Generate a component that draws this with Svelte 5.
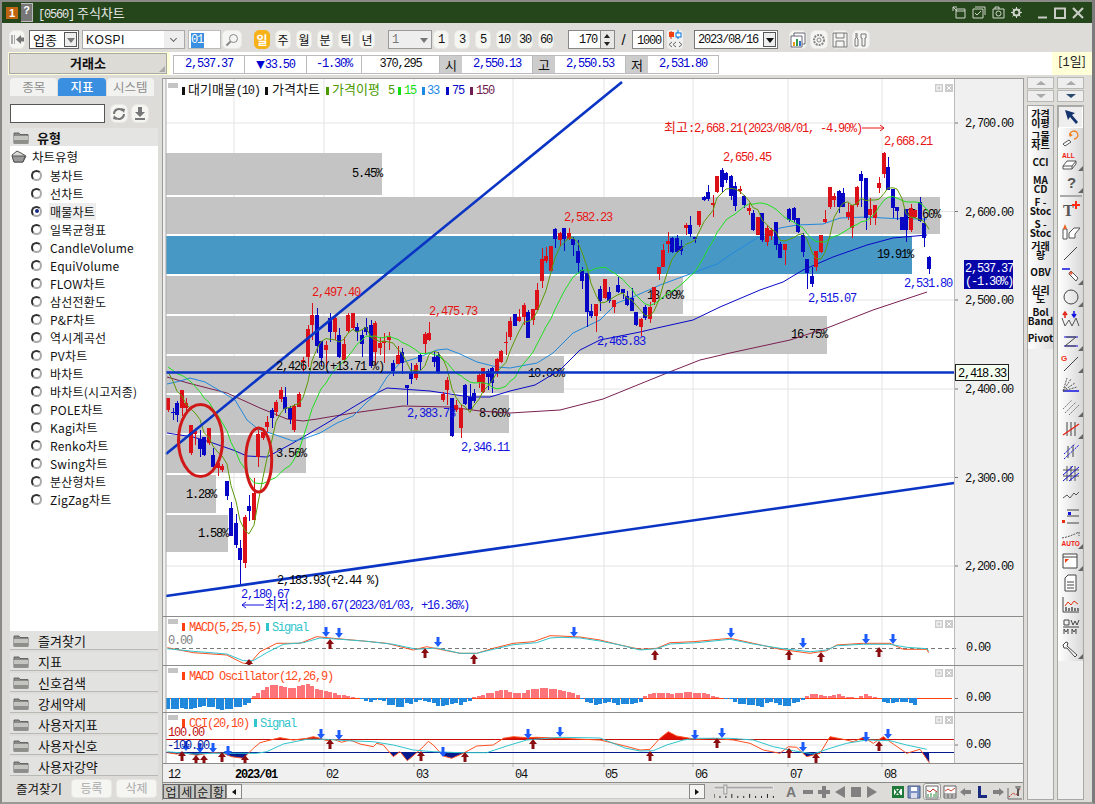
<script>
	const cx = (i) => Math.round(168.3 + 4.5 * i);

	// candles in screen px: [0 red / 1 blue, body top, body bottom, high, low]
	const candles = [
		[0,398,410,398,412],[1,412,413,408,420],[1,403,415,401,422],[0,390,408,390,416],[0,403,408,398,412],
		[0,425,453,425,455],[0,431,434,428,445],[1,439,449,430,457],[1,437,455,437,456],[0,428,443,428,445],
		[1,455,467,448,469],[0,463,468,460,476],[0,466,470,464,472],[1,481,496,481,500],[1,508,536,502,536],
		[1,523,545,514,548],[1,548,560,540,585],[0,517,563,515,568],[1,506,511,495,521],[0,493,520,478,520],
		[0,434,457,430,467],[0,432,438,428,440],[0,422,427,416,432],[1,410,418,408,428],[0,402,412,400,416],
		[0,390,399,387,402],[1,397,409,387,413],[1,408,419,406,424],[0,406,430,404,432],[0,394,407,392,406],
		[0,360,362,357,373],[0,329,357,325,367],[0,315,325,303,340],[1,315,346,308,353],[1,341,358,341,365],
		[0,345,350,341,367],[1,318,332,313,342],[0,318,332,316,340],[1,335,357,328,358],[0,344,360,337,363],
		[0,315,331,313,333],[0,313,328,313,330],[1,327,332,323,341],[1,335,344,330,357],[1,327,332,318,335],
		[1,325,366,320,368],[0,323,352,321,365],[0,343,348,337,355],[0,341,343,333,363],[0,337,340,332,350],
		[1,363,371,360,376],[0,355,364,346,364],[1,352,363,348,374],[1,385,388,385,405],[1,373,379,363,384],
		[0,365,378,363,380],[1,355,362,353,370],[0,334,344,332,353],[0,333,340,322,341],[1,357,362,352,367],
		[1,355,372,352,374],[0,394,400,392,402],[0,380,390,377,405],[1,398,436,398,437],[0,405,410,400,412],
		[0,408,428,405,438],[1,385,404,384,405],[1,397,409,384,409],[1,393,401,389,403],[0,375,382,373,388],
		[0,368,392,368,393],[1,371,377,369,390],[1,368,383,367,393],[0,359,372,358,377],[0,351,362,350,363],
		[0,342,343,332,355],[0,321,337,317,340],[1,314,326,314,326],[0,317,321,309,322],[0,305,317,303,325],
		[1,312,338,310,338],[0,309,320,309,325],[0,290,310,283,310],[0,259,281,248,288],[0,256,261,247,263],
		[0,246,271,246,272],[1,229,239,228,248],[0,233,240,232,246],[1,228,239,228,251],[0,233,239,228,240],
		[1,239,245,237,256],[1,251,263,240,273],[1,270,281,267,289],[1,273,312,273,327],[1,311,316,304,318],
		[0,304,316,304,332],[1,289,301,286,311],[0,279,298,279,299],[1,292,301,287,303],[0,300,307,300,313],
		[1,285,292,277,293],[1,289,293,289,299],[1,296,305,291,306],[1,298,311,288,311],[1,312,325,312,326],
		[0,319,327,318,336],[1,307,318,305,320],[0,307,319,302,323],[0,287,302,287,305],[0,267,274,267,280],
		[0,250,267,244,267],[0,241,244,232,253],[1,238,252,237,253],[1,238,252,235,253],[1,246,251,240,255],
		[0,225,228,223,235],[1,225,234,216,237],[1,237,239,237,243],[0,211,225,211,227],[1,197,200,196,201],
		[1,192,199,185,201],[0,203,205,195,217],[0,176,192,176,193],[1,170,187,168,192],[1,173,180,172,183],
		[1,176,196,175,200],[1,186,206,182,211],[0,189,191,186,194],[1,196,205,195,208],[0,208,211,203,215],
		[1,213,230,210,231],[0,217,235,217,235],[1,213,240,213,242],[0,228,242,225,246],[0,230,236,228,240],
		[1,222,245,222,250],[1,244,258,242,258],[0,244,250,244,265],[1,209,220,208,222],[1,208,220,207,223],
		[1,218,232,218,233],[1,235,252,233,257],[1,259,273,259,289],[1,276,284,267,287],[0,251,267,251,271],
		[0,235,252,235,253],[0,219,222,210,223],[0,187,207,187,209],[0,196,200,193,207],[1,191,207,190,213],
		[1,193,207,188,207],[0,212,217,203,220],[0,205,228,205,238],[0,187,205,186,207],[1,174,181,171,207],
		[1,178,218,178,230],[0,209,215,198,225],[0,205,218,205,225],[0,183,188,177,193],[0,153,174,152,178],
		[1,167,190,157,190],[1,189,208,189,218],[1,207,211,207,220],[1,217,230,217,230],[1,209,230,209,242],
		[0,208,230,204,232],[0,210,217,210,218],[1,202,221,197,222],[1,223,238,218,247],[1,257,269,256,274]
	];

	const closes = candles.map((c) => (c[0] ? c[2] : c[1]));
	const padded = [...Array(14).fill(365), ...closes];
	function sma(n) {
		return closes
			.map((_, i) => {
				let s = 0;
				for (let k = 0; k < n; k++) s += padded[i + 14 - k];
				return `${cx(i)},${(s / n).toFixed(1)}`;
			})
			.join(' ');
	}
	const ma5 = sma(5);
	const ma15 = sma(15);
	const ma33 = '167,384 180,381 190,378 205,382 222,392 235,400 247,420 258,429 270,433 293,441 303,439 320,433 337,423 353,416 367,402 377,393 387,377 400,363 417,358 437,350 447,349 460,354 477,362 497,367 510,368 537,363 553,353 573,333 600,320 617,303 633,297 660,285 690,274 717,264 733,253 757,238 780,228 797,225 823,224 840,218 867,217 883,218 907,219 927,219';
	const ma75 = '167,433 193,437 210,442 233,450 247,456 267,457 293,443 327,423 360,403 377,393 387,388 430,391 470,397 490,397 510,391 535,385 560,370 580,350 600,340 640,332 657,328 693,320 720,307 760,290 783,282 803,270 833,257 867,245 893,238 927,235';
	const ma150 = '167,377 188,383 227,393 260,408 287,419 303,421 317,419 353,413 403,406 450,407 480,411 510,413 560,410 603,399 667,373 700,360 730,353 790,340 827,328 873,310 927,292';

	// volume-at-price bars
	const bars = [
		[153, 195, 382], [197, 234, 940], [236, 274, 912], [276, 314, 683], [316, 354, 827],
		[356, 393, 564], [395, 433, 509], [435, 473, 306], [475, 513, 216], [515, 552, 228]
	];
	const pctLabels = [
		[352,177,'5.45%'],[904,218,'20.60%'],[877,258,'19.91%'],[647,299,'13.09%'],[791,338,'16.75%'],
		[528,377,'10.00%'],[479,417,'8.60%'],[276,457,'3.56%'],[186,498,'1.28%'],[198,537,'1.58%']
	];
	const redLabels = [[884,145,'2,668.21'],[723,161,'2,650.45'],[564,221,'2,582.23'],[312,296,'2,497.40'],[429,315,'2,475.73']];
	const blueLabels = [[808,302,'2,515.07'],[904,287,'2,531.80'],[597,345,'2,465.83'],[407,417,'2,383.73'],[461,451,'2,346.11'],[241,598,'2,180.67']];
	const gridX = [234, 324, 414, 513, 604, 693, 788, 882];
	const levels = [[123,'2,700.00'],[211.5,'2,600.00'],[300,'2,500.00'],[389,'2,400.00'],[477.5,'2,300.00'],[566,'2,200.00']];

	const pts = (ox, list) => list.map(([x, y]) => `${(ox + x / 3).toFixed(1)},${(610 + y / 3).toFixed(1)}`).join(' ');

	const macd = pts(160, [[22,113],[100,128],[200,135],[250,160],[270,160],[300,125],[350,100],[420,100],[470,80],[520,85],[600,92],[680,100],[760,120],[800,110],[900,130],[950,130],[1000,115],[1060,100],[1120,95],[1170,77],[1200,78]])
		+ ' 580,637 600,640 620,645 ' + pts(640, [[0,118],[50,115],[90,98],[160,95],[270,85],[340,100],[420,118],[510,130],[560,122],[590,105],[670,100],[750,100],[790,118],[860,118],[866,128]]);
	const signal = pts(160, [[22,116],[100,124],[200,132],[250,152],[280,152],[320,128],[370,103],[430,98],[480,84],[540,88],[620,94],[700,103],[770,118],[830,114],[900,130],[950,130],[1000,118],[1060,104],[1130,98],[1170,84],[1200,82]])
		+ ' 580,638 600,641 620,645 ' + pts(640, [[0,120],[50,116],[90,102],[170,98],[270,88],[340,102],[420,115],[510,125],[560,120],[590,107],[670,103],[750,103],[800,112],[860,116],[866,122]]);

	const cciPts = pts(160, [[22,428],[50,432],[80,430],[110,436],[130,432],[160,428],[190,430],[215,440],[250,445],[280,415],[300,398],[340,388],[360,383],[400,390],[440,385],[460,380],[480,385],[500,392],[520,388],[545,397],[570,390],[600,402],[640,410],[650,400],[670,405],[700,440],[720,425],[742,452],[770,428],[790,410],[805,394],[820,405],[850,438],[875,445],[910,430],[950,408],[1000,405],[1030,385],[1060,380],[1100,383],[1130,382],[1200,385]])
		+ ' 600,740 625,746 ' + pts(640, [[0,420],[30,418],[60,385],[85,365],[110,378],[150,385],[170,388],[220,385],[280,390],[330,400],[370,420],[420,430],[445,410],[470,412],[500,440],[540,430],[570,380],[610,388],[640,395],[670,382],[700,400],[730,380],[750,395],[800,430],[840,418],[868,458]]);
	const cciSig = pts(160, [[22,425],[100,432],[160,430],[230,430],[290,430],[320,425],[370,402],[440,388],[500,388],[560,392],[640,395],[700,405],[760,420],[820,425],[900,428],[980,428],[1040,408],[1100,390],[1200,382]])
		+ ' 600,738 625,748 ' + pts(640, [[0,423],[40,422],[80,405],[130,390],[170,385],[270,385],[340,390],[400,410],[460,422],[520,432],[570,415],[620,400],[680,390],[750,392],[800,405],[860,418]]);
	const cciRed = `168,739 ${cciPts} 929,739`;
	const cciNavy = `168,752 ${cciPts} 929,752`;

	// oscillator heights in 3x px off the zero line
	const oscTop = [
		297,296,297,295,297,297,295,290,289,290,292,298,301,298,297,292,290,285,280,
		258,248,240,232,225,225,228,230,233,233,228,225,222,228,238,240,242,245,250,255,255,258,260,
		264,267,272,275,270,270,272,285,285,290,290,280,282,275,270,272,275,278,288,288,285,282,280,285,275,272,
		262,258,255,250,248,242,240,240,245,248,248,250,240,236,236,235,235,236,238,240,242,245,250,256,
		268,275,280,285,282,278,276,280,284,283,
		283,282,278,275,
		258,252,248,248,250,250,252,248,248,247,246,248,250,250,252,258,262,263,
		267,268,275,282,283,285,285,288,290,280,277,278,285,288,287,280,275,270,
		257,253,253,254,258,258,254,253,258,262,262,263,258,253,258,260,263,
		275,278,278,276,277,277,280,285
	];
	const osc = oscTop.slice(0, 170).map((v, i) => ({ x: cx(i) - 2, y: v < 265 ? 610 + v / 3 : 698.3, h: Math.abs(v - 265) / 3, up: v < 265 }));

	const macdDown = [[326,632],[339,633],[438,642],[574,632],[731,633],[803,643],[866,639],[893,639]];
	const macdUp = [[249,664],[330,644],[425,653],[474,659],[655,655],[789,655],[821,657],[879,652]];
	const cciDown = [[186,746],[200,748],[213,748],[228,751],[321,734],[339,735],[443,752],[528,734],[560,732],[695,735],[722,733],[803,747],[866,737],[888,734]];
	const cciUp = [[182,756],[196,760],[204,760],[222,757],[245,760],[330,744],[421,756],[465,757],[533,744],[650,756],[717,743],[789,753],[816,758],[879,746]];

	const dayBtns = ['주', '월', '분', '틱', '년'];
	const numBtns = ['1', '3', '5', '10', '30', '60'];
	const radios = ['봉차트','선차트','매물차트','일목균형표','CandleVolume','EquiVolume','FLOW차트','삼선전환도','P&F차트','역시계곡선','PV차트','바차트','바차트(시고저종)','POLE차트','Kagi차트','Renko차트','Swing차트','분산형차트','ZigZag차트'];
	const groups = ['즐겨찾기','지표','신호검색','강세약세','사용자지표','사용자신호','사용자강약'];
	const shortcuts = [['가격','이평'],['그물','차트'],['CCI'],['MA','CD'],['F -','Stoc'],['S -','Stoc'],['거래','량'],['OBV'],['심리','도'],['Bol','Band'],['Pivot']];
</script>

{#snippet folder()}
	<svg class="folder" width="16" height="13" viewBox="0 0 16 13">
		<path d="M1 2h5l1 1.5h8v9H1z" fill="#8a8a86" stroke="#666" />
		<path d="M1 5h14v7.500H1z" fill="#c4c4c0" />
		<path d="M1 9h14v3.500H1z" fill="#8e8e8a" />
	</svg>
{/snippet}

{#snippet paneBtns(y)}
	<rect x="935" {y} width="8" height="8" fill="#ccc" /><rect x="937" y={y + 2} width="4" height="4" fill="none" stroke="#fff" />
	<rect x="945" {y} width="8" height="8" fill="#ccc" /><path d="M947 {y + 2}l4 4m0-4l-4 4" stroke="#fff" />
{/snippet}

<div class="win">
	<header class="title">
		<span class="badge one">1</span>
		<span class="badge q">?</span>
		<span class="caption"><span class="m">[0560]</span> 주식차트</span>
		<div class="title-icons">
			<svg width="14" height="13" viewBox="0 0 14 13"><path d="M4 3h9v9H4zM4 5h9M1 5V1h4M1 1l4 4" fill="none" stroke="#cfd4cc" /></svg>
			<svg width="14" height="13" viewBox="0 0 14 13"><path d="M3 1h10v8M1 3h10v9H1zM3 7l2 2 4-4" fill="none" stroke="#cfd4cc" /></svg>
			<svg width="13" height="13" viewBox="0 0 13 13"><path d="M1 3h11v9H1zM3 3V1h4v2" fill="none" stroke="#cfd4cc" /><circle cx="6.500" cy="7.500" r="2.500" fill="none" stroke="#cfd4cc" /></svg>
			<svg width="11" height="11" viewBox="0 0 11 11"><circle cx="5.500" cy="5.500" r="3" fill="none" stroke="#cfd4cc" stroke-width="2" /><path d="M5.500 0v2M5.500 9v2M0 5.500h2M9 5.500h2M1.500 1.500l1.500 1.500M8 8l1.500 1.500M1.500 9.500L3 8M8 3l1.500-1.500" stroke="#cfd4cc" /></svg>
			<svg class="w-min" width="11" height="12" viewBox="0 0 11 12"><path d="M1 10.500h9" stroke="#c8ccc4" stroke-width="2" /></svg>
			<svg width="12" height="12" viewBox="0 0 12 12"><path d="M1 1.500h10v9.500H1z" fill="none" stroke="#c8ccc4" stroke-width="2" /></svg>
			<svg width="12" height="12" viewBox="0 0 12 12"><path d="M1 1l10 10M11 1L1 11" stroke="#c8ccc4" stroke-width="2.200" /></svg>
		</div>
	</header>

	<div class="row1">
		<button class="soft start"><svg width="14" height="11" viewBox="0 0 14 11"><path d="M1 1h2v9H1zM4 1h1v9H4z" fill="#aaa" /><path d="M6 5.500L11 1v2.500h3v4h-3V10z" fill="#777" /></svg></button>
		<div class="combo up"><span class="ko">업종</span><i class="drop boxed"></i></div>
		<div class="combo kospi"><span class="lat">KOSPI</span><i class="chev"></i></div>
		<div class="code"><span class="sel">01</span></div>
		<button class="soft search"><svg width="14" height="14" viewBox="0 0 14 14"><circle cx="8.500" cy="5.500" r="4" fill="none" stroke="#888" /><path d="M5.500 8.500l-4 4" stroke="#888" stroke-width="2" /></svg></button>
		<button class="soft per active">일</button>
		{#each dayBtns as b}<button class="soft per">{b}</button>{/each}
		<div class="combo one-c"><span class="m gray">1</span><i class="drop"></i></div>
		{#each numBtns as b, i}<button class="soft per n" class:first={i === 0}>{b}</button>{/each}
		<div class="spin"><span class="m">170</span></div>
		<div class="spinbtn"><i></i><i class="dn"></i></div>
		<span class="slash">/</span>
		<div class="spin k"><span class="m">1000</span></div>
		<div class="candle-ic">
			<svg width="15" height="19" viewBox="0 0 15 19"><path d="M3 1v8" stroke="#e03010" /><rect x="1" y="2" width="5" height="5" fill="#f04010" /><path d="M10 0v9" stroke="#0070e0" /><rect x="8" y="3" width="5" height="4" fill="#fff" stroke="#0070e0" /><path d="M4 12l-3 2.500 3 2.500M8 12l-3 2.500 3 2.500M11 12l3 2.500-3 2.500" fill="none" stroke="#666" /></svg>
		</div>
		<div class="combo date"><span class="m">2023/08/16</span><i class="drop boxed dark"></i></div>
		<div class="tools">
			<button class="soft tool"><svg width="16" height="16" viewBox="0 0 16 16"><path d="M4 1h11v11H4z" fill="#fff" stroke="#667" /><path d="M1 4h11v11H1z" fill="#fff" stroke="#667" /><rect x="3" y="10" width="2" height="4" fill="#e8a020" /><rect x="6" y="7" width="2" height="7" fill="#30a050" /><rect x="9" y="9" width="2" height="5" fill="#3070d0" /></svg></button>
			<button class="soft tool"><svg width="16" height="16" viewBox="0 0 16 16"><circle cx="8" cy="8" r="5" fill="none" stroke="#888" stroke-dasharray="2 1" stroke-width="2" /><circle cx="8" cy="8" r="2" fill="none" stroke="#888" /></svg></button>
			<button class="soft tool"><svg width="16" height="16" viewBox="0 0 16 16"><path d="M1 1h14v14H1zM4 1v5h8V1M4 15v-6h8v6" fill="none" stroke="#777" /></svg></button>
			<button class="soft tool"><svg width="16" height="16" viewBox="0 0 16 16"><path d="M3 1v5l-1 1v7h3V7L4 6V1M8 2h5v4h-1v8h-3V6H8z" fill="none" stroke="#777" /></svg></button>
		</div>
	</div>

	<div class="row2">
		<div class="market"><b>거래소</b><i class="grip"></i></div>
		<div class="quotes">
			<span class="q m blue w72">2,537.37</span>
			<span class="q m blue w62"><span class="tri">▼</span>33.50</span>
			<span class="q m blue w55">-1.30%</span>
			<span class="q m w78">370,295</span>
			<span class="lab">시</span><span class="q m blue w71">2,550.13</span>
			<span class="lab">고</span><span class="q m blue w71">2,550.53</span>
			<span class="lab">저</span><span class="q m blue w71">2,531.80</span>
		</div>
		<div class="term">[<span class="m one">1</span>일]</div>
	</div>

	<div class="main">
		<aside class="left">
			<div class="tabs">
				<span class="tab">종목</span><span class="tab on">지표</span><span class="tab">시스템</span>
			</div>
			<div class="find">
				<div class="find-input"></div>
				<button class="soft round"><svg width="14" height="14" viewBox="0 0 14 14"><path d="M2 7a5 5 0 0 1 9-3M12 7a5 5 0 0 1-9 3" fill="none" stroke="#777" stroke-width="2" /><path d="M9 1l4 1-1 4zM5 13l-4-1 1-4z" fill="#777" /></svg></button>
				<button class="soft round"><svg width="14" height="15" viewBox="0 0 14 15"><path d="M5 1h4v5h3L7 11 2 6h3zM2 12h10v2H2z" fill="#777" /></svg></button>
			</div>
			<div class="grp head">{@render folder()}<b>유형</b></div>
			<div class="tree">
				<div class="root">
					<svg width="16" height="13" viewBox="0 0 16 13"><path d="M1 5l5-4 4 2 5 3-3 6H3z" fill="#d8d8d4" stroke="#555" /><path d="M1 6h11l2 0-2 6H3z" fill="#999" stroke="#555" /></svg>
					<span>차트유형</span>
				</div>
				{#each radios as r, i}
					<div class="opt">
						<span class="radio" class:checked={i === 2}></span>
						<span class="lbl" class:hl={i === 2}>{r}</span>
					</div>
				{/each}
			</div>
			{#each groups as g}
				<div class="grp">{@render folder()}<span>{g}</span></div>
			{/each}
			<div class="fav">
				<span>즐겨찾기</span>
				<button class="soft ghost">등록</button>
				<button class="soft ghost">삭제</button>
			</div>
		</aside>

		<section class="chart">
			<svg class="pane" width="860" height="537" viewBox="163 79 860 537">
				<rect x="163" y="79" width="860" height="537" fill="#f0f0f0" />
				<rect x="166" y="79" width="788" height="537" fill="#fff" />
				{#each gridX as g}<line x1={g} x2={g} y1="79" y2="616" class="grid" />{/each}
				{#each levels as l}<line x1="166" x2="954" y1={l[0]} y2={l[0]} class="grid" />{/each}
				{#each bars as b, i}
					<rect x="166" y={b[0]} width={b[2] - 166} height={b[1] - b[0]} fill={i === 2 ? '#4898c6' : '#c4c4c4'} />
				{/each}
				{#each pctLabels as p}<text x={p[0]} y={p[1]} class="t" fill="#000">{p[2]}</text>{/each}

				<polyline points={ma150} class="ln" stroke="#7a2050" />
				<polyline points={ma75} class="ln" stroke="#0808c8" />
				<polyline points={ma33} class="ln" stroke="#2088dc" />
				{#each candles as c, i}
					<g shape-rendering="crispEdges" fill={c[0] ? '#0606c4' : '#dc1018'}>
						<rect x={cx(i)} y={c[3]} width="1" height={c[4] - c[3]} />
						<rect x={cx(i) - 2} y={c[1]} width="4" height={Math.max(c[2] - c[1], 1)} />
					</g>
				{/each}
				<polyline points={ma15} class="ln" stroke="#20e020" />
				<polyline points={ma5} class="ln" stroke="#5c9a06" />

				<line x1="166" y1="454" x2="622" y2="82" class="trend" />
				<line x1="166" y1="596" x2="954" y2="483" class="trend" />
				<line x1="166" y1="372.500" x2="954" y2="372.500" class="trend" />
				<ellipse cx="200.500" cy="440.500" rx="22" ry="36" class="ring" />
				<ellipse cx="258.700" cy="460" rx="13" ry="32" class="ring" />

				{#each redLabels as p}<text x={p[0]} y={p[1]} class="t" fill="#e81414">{p[2]}</text>{/each}
				{#each blueLabels as p}<text x={p[0]} y={p[1]} class="t" fill="#1010e0">{p[2]}</text>{/each}
				<text x="664" y="132" class="t" fill="#e81414"><tspan class="k">최고</tspan>:2,668.21(2023/08/01, -4.90%)</text>
				<path d="M862 128h22m-4-3l4 3-4 3" fill="none" stroke="#e81414" />
				<path d="M242 605h22m-18-3l-4 3 4 3" fill="none" stroke="#1010e0" />
				<text x="265" y="609" class="t" fill="#1010e0"><tspan class="k">최저</tspan>:2,180.67(2023/01/03, +16.36%)</text>
				<text x="277" y="584" class="t" fill="#000">2,183.93(+2.44 %)</text>
				<text x="276" y="370" class="t" fill="#000">2,426.20(+13.71 %)</text>

				<rect x="168" y="83" width="10" height="5" fill="#c4c4c4" />
				<rect x="182" y="87" width="3" height="8" fill="#111" /><text x="188" y="94" class="t" fill="#111"><tspan class="k">대기매물</tspan>(10)</text>
				<rect x="265" y="87" width="3" height="8" fill="#111" /><text x="272" y="94" class="k" fill="#111">가격차트</text>
				<rect x="326" y="87" width="3" height="8" fill="#4a9a00" /><text x="332" y="94" class="k" fill="#4a9a00">가격이평</text><text x="388" y="94" class="t" fill="#4a9a00">5</text>
				<rect x="398" y="87" width="3" height="8" fill="#10e010" /><text x="404" y="94" class="t" fill="#10e010">15</text>
				<rect x="422" y="87" width="3" height="8" fill="#1e88e5" /><text x="427" y="94" class="t" fill="#1e88e5">33</text>
				<rect x="446" y="87" width="3" height="8" fill="#0808c8" /><text x="452" y="94" class="t" fill="#0808c8">75</text>
				<rect x="470" y="87" width="3" height="8" fill="#702050" /><text x="476" y="94" class="t" fill="#702050">150</text>
				{@render paneBtns(84)}

				{#each levels as l}
					<line x1="954" x2="958" y1={l[0]} y2={l[0]} stroke="#777" />
					<text x="965" y={l[0] + 4} class="t" fill="#111">{l[1]}</text>
				{/each}
				<line x1="166" x2="166" y1="79" y2="616" stroke="#aaa" />
				<line x1="954.500" x2="954.500" y1="79" y2="616" stroke="#bbb" />
				<rect x="955.500" y="364.500" width="53" height="16" fill="#f4fff0" stroke="#222" />
				<text x="958" y="377" class="t" fill="#000">2,418.33</text>
				<rect x="964" y="260" width="49" height="29" fill="#0606a8" />
				<text x="965" y="272" class="t" fill="#fff">2,537.37</text>
				<text x="965" y="285" class="t" fill="#fff">(-1.30%)</text>
			</svg>

			<svg class="pane" width="860" height="48" viewBox="163 617 860 48">
				<rect x="163" y="617" width="860" height="48" fill="#f0f0f0" />
				<rect x="166" y="617" width="788" height="48" fill="#fff" />
				{#each gridX as g}<line x1={g} x2={g} y1="617" y2="665" class="grid" />{/each}
				<line x1="168" x2="958" y1="648.500" y2="648.500" stroke="#777" stroke-dasharray="4 3" />
				<polyline points={macd} class="ln" stroke="#ff5020" />
				<polyline points={signal} class="ln" stroke="#30c4cc" />
				{#each macdDown as a}<path d="M{a[0] - 1.500} {a[1] - 5}h3v5h2.500l-4 5-4-5h2.500z" fill="#1c5cff" />{/each}
				{#each macdUp as a}<path d="M{a[0] - 1.500} {a[1] + 5}h3v-5h2.500l-4-5-4 5h2.500z" fill="#8a0e10" />{/each}
				<rect x="168" y="619" width="10" height="5" fill="#c4c4c4" />
				<rect x="182" y="623" width="3" height="8" fill="#ff4010" /><text x="189" y="631" class="t" fill="#ff4a1a">MACD(5,25,5)</text>
				<rect x="266" y="623" width="3" height="8" fill="#30c4cc" /><text x="272" y="631" class="t" fill="#30c4cc">Signal</text>
				<text x="168" y="644" class="t" fill="#808080">0.00</text>
				{@render paneBtns(620)}
				<text x="966" y="651" class="t" fill="#111">0.00</text>
				<line x1="166" x2="166" y1="617" y2="665" stroke="#aaa" />
				<line x1="954.500" x2="954.500" y1="617" y2="665" stroke="#bbb" />
			</svg>

			<svg class="pane" width="860" height="46" viewBox="163 666 860 46">
				<rect x="163" y="666" width="860" height="46" fill="#f0f0f0" />
				<rect x="166" y="666" width="788" height="46" fill="#fff" />
				{#each gridX as g}<line x1={g} x2={g} y1="666" y2="712" class="grid" />{/each}
				<line x1="168" x2="952" y1="698.500" y2="698.500" stroke="#ff4010" />
				{#each osc as o}
					<rect x={o.x} y={o.y} width="4" height={o.h} fill={o.up ? '#ff7478' : '#2088dc'} shape-rendering="crispEdges" />
				{/each}
				<rect x="168" y="668" width="10" height="5" fill="#c4c4c4" />
				<rect x="182" y="672" width="3" height="8" fill="#ff4010" /><text x="189" y="680" class="t" fill="#ff4a1a">MACD Oscillator(12,26,9)</text>
				{@render paneBtns(669)}
				<line x1="954" x2="958" y1="698.500" y2="698.500" stroke="#777" />
				<text x="966" y="701" class="t" fill="#111">0.00</text>
				<line x1="166" x2="166" y1="666" y2="712" stroke="#aaa" />
				<line x1="954.500" x2="954.500" y1="666" y2="712" stroke="#bbb" />
			</svg>

			<svg class="pane" width="860" height="50" viewBox="163 713 860 50">
				<defs>
					<clipPath id="aboveLine"><rect x="166" y="713" width="788" height="26" /></clipPath>
					<clipPath id="belowLine"><rect x="166" y="752" width="788" height="14" /></clipPath>
				</defs>
				<rect x="163" y="713" width="860" height="50" fill="#f0f0f0" />
				<rect x="166" y="713" width="788" height="50" fill="#fff" />
				{#each gridX as g}<line x1={g} x2={g} y1="713" y2="763" class="grid" />{/each}
				<line x1="166" x2="954" y1="745" y2="745" class="grid" />
				<polygon points={cciRed} fill="#dd1000" clip-path="url(#aboveLine)" />
				<polygon points={cciNavy} fill="#061a90" clip-path="url(#belowLine)" />
				<line x1="166" x2="954" y1="739.500" y2="739.500" stroke="#c81008" />
				<line x1="166" x2="954" y1="752.500" y2="752.500" stroke="#061a90" />
				<polyline points={cciPts} class="ln" stroke="#ff5020" />
				<polyline points={cciSig} class="ln" stroke="#30c4cc" />
				{#each cciDown as a}<path d="M{a[0] - 1.500} {a[1] - 5}h3v5h2.500l-4 5-4-5h2.500z" fill="#1c5cff" />{/each}
				{#each cciUp as a}<path d="M{a[0] - 1.500} {a[1] + 5}h3v-5h2.500l-4-5-4 5h2.500z" fill="#8a0e10" />{/each}
				<rect x="168" y="715" width="10" height="5" fill="#c4c4c4" />
				<rect x="182" y="719" width="3" height="8" fill="#ff4010" /><text x="189" y="727" class="t" fill="#ff4a1a">CCI(20,10)</text>
				<rect x="254" y="719" width="3" height="8" fill="#30c4cc" /><text x="260" y="727" class="t" fill="#30c4cc">Signal</text>
				<text x="168" y="736" class="t" fill="#c01010">100.00</text>
				<text x="167" y="749" class="t" fill="#0818a0">-100.00</text>
				{@render paneBtns(716)}
				<line x1="954" x2="958" y1="745" y2="745" stroke="#777" />
				<text x="966" y="748" class="t" fill="#111">0.00</text>
				<line x1="166" x2="166" y1="713" y2="763" stroke="#aaa" />
				<line x1="954.500" x2="954.500" y1="713" y2="763" stroke="#bbb" />
			</svg>

			<svg class="pane dates" width="860" height="18" viewBox="163 764 860 18">
				<rect x="163" y="764" width="860" height="18" fill="#f0f0f0" />
				<text x="168" y="778" class="t" fill="#111">12</text>
				<text x="235" y="778" class="t bold" fill="#000">2023/01</text>
				<text x="326" y="778" class="t" fill="#111">02</text>
				<text x="416" y="778" class="t" fill="#111">03</text>
				<text x="515" y="778" class="t" fill="#111">04</text>
				<text x="605" y="778" class="t" fill="#111">05</text>
				<text x="695" y="778" class="t" fill="#111">06</text>
				<text x="790" y="778" class="t" fill="#111">07</text>
				<text x="884" y="778" class="t" fill="#111">08</text>
				{#each gridX as g}<line x1={g} x2={g} y1="764" y2="767" stroke="#bbb" />{/each}
			</svg>

			<div class="foot">
				<span class="ft">업</span><span class="ft">세</span><span class="ft">순</span><span class="ft">황</span>
				<button class="arrowbtn"><i class="al"></i></button>
				<div class="track"></div>
				<button class="arrowbtn"><i class="ar"></i></button>
				<svg class="slider" width="62" height="15" viewBox="0 0 62 15">
					<rect x="0" y="2" width="60" height="3" fill="#aaa" stroke="#eee" />
					<path d="M0 10v4M6 12v2M12 12v2M18 10v4M24 12v2M30 12v2M36 10v4M42 12v2M48 12v2M54 10v4M60 12v2" stroke="#222" />
					<rect x="10" y="1" width="3" height="9" fill="#e8e8e4" stroke="#999" />
				</svg>
				<div class="foot-ic">
					<svg width="14" height="14" viewBox="0 0 14 14"><text x="1" y="12" class="a">A</text></svg>
					<svg width="14" height="14" viewBox="0 0 14 14"><rect x="2" y="5" width="10" height="4" fill="#808080" /></svg>
					<svg width="14" height="14" viewBox="0 0 14 14"><path d="M5 1h4v4h4v4H9v4H5V9H1V5h4z" fill="#808080" /></svg>
					<svg width="14" height="14" viewBox="0 0 14 14"><path d="M12 1v12L2 7z" fill="#808080" /></svg>
					<svg width="14" height="14" viewBox="0 0 14 14"><rect x="2" y="2" width="10" height="10" fill="#808080" /></svg>
					<svg width="14" height="14" viewBox="0 0 14 14"><path d="M2 1v12l10-6z" fill="#808080" /></svg>
				</div>
				<div class="foot-ic r">
					<svg width="14" height="14" viewBox="0 0 14 14"><rect x="1" y="1" width="12" height="12" fill="#1f7a3a" /><path d="M3 4h8v6H3z" fill="#fff" /><path d="M4 4l5 6M9 4L4 10" stroke="#1f7a3a" stroke-width="1.500" /></svg>
					<svg width="14" height="14" viewBox="0 0 14 14"><path d="M1 1h12v12H1z" fill="#7a92c4" stroke="#4a5a84" /><rect x="4" y="2" width="6" height="4" fill="#fff" /><rect x="4" y="8" width="6" height="5" fill="#dde" /></svg>
					<span class="raised"><svg width="14" height="14" viewBox="0 0 14 14"><path d="M1 1h12v12H1z" fill="#fff" stroke="#666" /><path d="M2 5l3 2 3-3 4 3" fill="none" stroke="#c03020" /><path d="M3 12V9M6 12V8M9 12V9M11 12V7" stroke="#2a8a3a" /></svg></span>
					<svg width="14" height="14" viewBox="0 0 14 14"><path d="M1 1h12v12H1zM1 9h12M1 11h12M5 9v4M9 9v4" fill="#fff" stroke="#666" /><path d="M2 6l3-2 3 2 4-3" fill="none" stroke="#d04030" /></svg>
					<svg width="14" height="14" viewBox="0 0 14 14"><path d="M1 7l5-4v2h6v4H6v2z" fill="#808080" /></svg>
					<svg width="14" height="14" viewBox="0 0 14 14"><path d="M3 1h3v9h6v3H3z" fill="#1a2a80" /></svg>
					<svg width="14" height="14" viewBox="0 0 14 14"><path d="M13 7L8 3v2H2v4h6v2z" fill="#808080" /></svg>
					<svg width="16" height="16" viewBox="0 0 16 16"><path d="M1 15h14M1 15V4" stroke="#666" fill="none" /><path d="M2 13l4-4 3 2 4-6" fill="none" stroke="#d03020" stroke-dasharray="2 1" /><path d="M8 2h6l-1 3h-4z" fill="#888" /><path d="M11 5v7" stroke="#555" stroke-width="2" /></svg>
				</div>
			</div>
		</section>

		<div class="rstrip">
			<div class="col">
				<div class="updn"><span class="ub"><i class="u"></i></span><span class="ub"><i class="d"></i></span></div>
				<div class="well">
					<div class="shorts">
						{#each shortcuts as s}
							<div class="sc">{#each s as l}<span>{l}</span>{/each}</div>
						{/each}
					</div>
				</div>
			</div>
			<div class="col">
				<div class="updn"><span class="ub"><i class="u"></i></span><span class="ub"><i class="d navy"></i></span></div>
				<div class="well">
					<div class="tools-v">
						<div class="ti sel-t"><svg width="18" height="18" viewBox="0 0 18 18"><path d="M3 2l10 3-3 2 6 7-2 2-6-7-2 3z" fill="#14346e" /></svg></div>
						<div class="ti"><svg width="20" height="18" viewBox="0 0 20 18"><path d="M9 6a4 4 0 1 1 4 3" fill="none" stroke="#f08020" stroke-width="1.300" /><path d="M8 3l1 4 3-2z" fill="#f08020" /><path d="M2 14l6-4 2 2-6 4z" fill="#fff" stroke="#555" /></svg></div>
						<div class="ti more"><svg width="20" height="18" viewBox="0 0 20 18"><text x="1" y="6" class="all">ALL</text><path d="M2 14l4-5h9l-4 5zM11 14v3H2v-3M15 9v3l-4 5" fill="#fff" stroke="#555" /></svg></div>
						<div class="ti more"><svg width="20" height="18" viewBox="0 0 20 18"><text x="6" y="14" class="qm">?</text></svg></div>
						<div class="vsep"></div>
						<div class="ti"><svg width="20" height="18" viewBox="0 0 20 18"><text x="2" y="16" class="tt">T</text><path d="M14 1h2v3h3v2h-3v3h-2V6h-3V4h3z" fill="#ff2a10" /></svg></div>
						<div class="ti"><svg width="20" height="18" viewBox="0 0 20 18"><path d="M2 7h4v10H2z" fill="#fff" stroke="#555" /><path d="M4 2l2 5H2z" fill="#f06020" /><path d="M8 11l5-5h6l-5 6v4H8z" fill="#fff" stroke="#555" /></svg></div>
						<div class="ti"><svg width="20" height="18" viewBox="0 0 20 18"><path d="M3 16L16 3" stroke="#444" /></svg></div>
						<div class="ti more"><svg width="20" height="18" viewBox="0 0 20 18"><path d="M1 3h8" stroke="#1010e0" stroke-width="1.500" /><path d="M8 7l2-2 7 7-2 3-7-7z" fill="#fff" stroke="#555" /><path d="M8 7l2-2 2 2-2 2z" fill="#f06040" /></svg></div>
						<div class="ti more"><svg width="20" height="18" viewBox="0 0 20 18"><circle cx="10" cy="9" r="7" fill="none" stroke="#444" /></svg></div>
						<div class="ti"><svg width="20" height="18" viewBox="0 0 20 18"><path d="M1 8l3 8 4-6 3 6 4-8 3 8" fill="none" stroke="#555" /><path d="M4 8V4M2 5l2-3 2 3" fill="none" stroke="#e02010" stroke-width="1.500" /><path d="M13 1v5M11 4l2 3 2-3" fill="none" stroke="#1010e0" stroke-width="1.500" /></svg></div>
						<div class="ti more"><svg width="20" height="18" viewBox="0 0 20 18"><path d="M3 5h14M3 14h14" stroke="#1010e0" /><path d="M5 5h10L4 14h11" fill="none" stroke="#444" /></svg></div>
						<div class="ti more"><svg width="20" height="18" viewBox="0 0 20 18"><text x="0" y="7" class="g">G</text><path d="M3 17L17 3" stroke="#444" /></svg></div>
						<div class="ti"><svg width="20" height="18" viewBox="0 0 20 18"><path d="M2 15h16" stroke="#1010e0" stroke-width="1.500" /><path d="M2 15L16 11M2 15L14 7M2 15L10 3M2 15L6 2" stroke="#555" stroke-dasharray="2 1" /></svg></div>
						<div class="ti more"><svg width="20" height="18" viewBox="0 0 20 18"><path d="M2 11L11 2M4 15L15 4M8 17L18 7" stroke="#777" stroke-dasharray="2 1" /></svg></div>
						<div class="ti more"><svg width="20" height="18" viewBox="0 0 20 18"><path d="M6 2v14M10 2v14M14 2v14" stroke="#444" /><path d="M2 15L18 4" stroke="#e82010" stroke-width="1.300" /></svg></div>
						<div class="ti"><svg width="20" height="18" viewBox="0 0 20 18"><path d="M7 4v12M12 3v12" stroke="#444" /><path d="M3 17L18 3M3 12L14 2" stroke="#1010e0" stroke-dasharray="2 1" /></svg></div>
						<div class="ti"><svg width="20" height="18" viewBox="0 0 20 18"><path d="M6 2v15M10 2v15M14 2v15M2 6h16M2 12h16" stroke="#555" /><path d="M2 17L18 3M2 11L12 2M8 17L18 9" stroke="#1010e0" /></svg></div>
						<div class="ti"><svg width="20" height="18" viewBox="0 0 20 18"><path d="M2 12l4-3 3 3 4-5 2 2 3-3" fill="none" stroke="#555" /></svg></div>
						<div class="ti"><svg width="20" height="18" viewBox="0 0 20 18"><path d="M6 2h12M6 8h12M6 15h12" stroke="#444" /><rect x="7" y="4" width="3" height="3" fill="#1010e0" /><rect x="1" y="12" width="3" height="3" fill="#e83010" /></svg></div>
						<div class="ti more"><svg width="20" height="18" viewBox="0 0 20 18"><path d="M1 8c6-1 11-3 17-6v4" fill="none" stroke="#555" stroke-dasharray="2 1" /><text x="0.500" y="16" class="auto">AUTO</text></svg></div>
						<div class="ti more"><svg width="20" height="18" viewBox="0 0 20 18"><path d="M2 2h14v14H2zM2 5h14" fill="#fff" stroke="#444" /><path d="M4 7h4L4 11z" fill="#f04010" /></svg></div>
						<div class="ti"><svg width="20" height="18" viewBox="0 0 20 18"><path d="M7 1h8v16H4V4zM6 8h7M6 11h7M6 14h7" fill="#fff" stroke="#444" /></svg></div>
						<div class="ti"><svg width="20" height="18" viewBox="0 0 20 18"><path d="M2 1v15h16" fill="none" stroke="#444" /><path d="M4 10l3-4 3 3 3-4 4 3" fill="none" stroke="#e03010" /><path d="M5 15v-4M8 15v-3M11 15v-4M14 15v-3M17 15v-3" stroke="#777" stroke-width="2" /></svg></div>
						<div class="ti"><svg width="20" height="18" viewBox="0 0 20 18"><path d="M3 2h5v5H3zM10 2l2 5 2-4 2 4 2-5M2 9h16M3 16v-5l2 3 2-3v5M11 16v-5l2 3 2-3v5" fill="none" stroke="#444" /></svg></div>
						<div class="ti more"><svg width="20" height="18" viewBox="0 0 20 18"><path d="M2 5l3-3 2 1-1 3 10 9-2 2L6 8 3 8z" fill="#fff" stroke="#444" /></svg></div>
					</div>
				</div>
			</div>
		</div>
	</div>
</div>

<style>
	:global(body) {
		margin: 0;
		background: #ddd;
	}
	* {
		box-sizing: border-box;
	}
	.win {
		width: 1095px;
		height: 804px;
		overflow: hidden;
		background: #dddcd8;
		border-left: 2px solid #8a8a86;
		border-right: 3px solid #7c7c7c;
		border-bottom: 2px solid #9a9a96;
		font-family: 'Liberation Sans', 'Noto Sans CJK KR', sans-serif;
		font-size: 12px;
		color: #111;
		display: flex;
		flex-direction: column;
	}
	button {
		padding: 0;
		font: inherit;
		color: inherit;
	}
	.m {
		font-family: 'Liberation Mono', 'Noto Sans CJK KR', monospace;
		font-size: 12px;
		letter-spacing: -1.2px;
	}
	.title {
		height: 23px;
		flex: none;
		background: #25461a;
		border-top: 2px solid #8a8a86;
		display: flex;
		align-items: center;
		color: #e6e6e6;
		padding-left: 4px;
		font-family: 'Noto Sans CJK KR', sans-serif;
		font-size: 13px;
	}
	.badge {
		width: 12px;
		height: 12px;
		margin-right: 3px;
		font: bold 11px/12px 'Liberation Sans', sans-serif;
		text-align: center;
		color: #fff;
	}
	.badge.one {
		background: #bf6410;
	}
	.badge.q {
		background: #777;
	}
	.caption {
		margin-left: 2px;
	}
	.title-icons {
		margin-left: auto;
		margin-right: 8px;
		display: flex;
		align-items: center;
		gap: 6px;
	}
	.w-min {
		margin-left: 9px;
	}

	.row1 {
		height: 19px;
		margin-top: 7px;
		padding-left: 7px;
		display: flex;
		flex: none;
	}
	.soft {
		background: #f5f5f2;
		border: 1px solid #e8e8e4;
		border-radius: 5px;
		height: 19px;
		font-family: 'Noto Sans CJK KR', sans-serif;
		font-size: 12px;
		line-height: 16px;
		display: flex;
		align-items: center;
		justify-content: center;
	}
	.start {
		width: 16px;
	}
	.combo {
		background: #fff;
		border: 1px solid #666;
		height: 19px;
		display: flex;
		align-items: center;
		justify-content: space-between;
		padding-left: 3px;
		overflow: hidden;
	}
	.combo.up {
		width: 50px;
		margin-left: 4px;
	}
	.ko {
		font-family: 'Noto Sans CJK KR', sans-serif;
		font-size: 13px;
	}
	.lat {
		font-size: 12px;
		letter-spacing: 0.4px;
	}
	.kospi {
		width: 103px;
		margin-left: 3px;
		border-color: #aaa;
	}
	.drop {
		width: 14px;
		height: 17px;
		background: #eee;
		position: relative;
		flex: none;
	}
	.drop::after {
		content: '';
		position: absolute;
		left: 3px;
		top: 7px;
		border: 4px solid transparent;
		border-top: 5px solid #777;
		border-bottom: 0;
	}
	.drop.boxed {
		border: 1px solid #555;
		margin: 1px;
		height: 15px;
		width: 13px;
	}
	.drop.boxed::after {
		top: 5px;
		left: 2px;
	}
	.drop.dark::after {
		border-top-color: #111;
	}
	.chev {
		width: 20px;
		height: 17px;
		background: #eee;
		position: relative;
	}
	.chev::after {
		content: '';
		position: absolute;
		left: 7px;
		top: 5px;
		width: 4px;
		height: 4px;
		border-right: 1.5px solid #666;
		border-bottom: 1.5px solid #666;
		transform: rotate(45deg);
	}
	.code {
		width: 33px;
		height: 19px;
		margin-left: 3px;
		background: #fff;
		border: 1px solid #bbb;
		padding: 1px 2px;
	}
	.sel {
		display: inline-block;
		background: #3a8fe0;
		color: #fff;
		width: 13px;
		height: 15px;
		font: 12px/15px 'Liberation Mono', monospace;
		letter-spacing: -1.2px;
	}
	.search {
		width: 20px;
		margin-left: 1px;
	}
	.per {
		width: 16px;
		margin-left: 5px;
	}
	.per.active {
		margin-left: 12px;
		background: #f7b21a;
		border-color: #f7b21a;
		color: #fff;
		font-weight: bold;
	}
	.one-c {
		width: 44px;
		margin-left: 13px;
		background: #eee;
		border-color: #999;
	}
	.gray {
		color: #777;
	}
	.per.n {
		font-family: 'Liberation Mono', monospace;
		letter-spacing: -1.2px;
	}
	.per.first {
		margin-left: 1px;
	}
	.spin {
		margin-left: 14px;
		width: 33px;
		height: 19px;
		background: #fff;
		border: 1px solid #888;
		text-align: right;
		padding-right: 3px;
		line-height: 16px;
	}
	.spinbtn {
		width: 14px;
		height: 19px;
		background: #e8e8e4;
		border: 1px solid #888;
		border-left: 0;
		position: relative;
	}
	.spinbtn i {
		position: absolute;
		left: 3px;
		top: 3px;
		border: 3px solid transparent;
		border-bottom: 4px solid #222;
		border-top: 0;
	}
	.spinbtn i.dn {
		top: 11px;
		border-top: 4px solid #222;
		border-bottom: 0;
	}
	.slash {
		width: 17px;
		text-align: center;
		font-size: 15px;
		line-height: 19px;
	}
	.spin.k {
		margin-left: 0;
		width: 32px;
		padding-right: 2px;
	}
	.candle-ic {
		width: 16px;
		margin-left: 3px;
		display: flex;
		align-items: center;
		justify-content: center;
		background: #f0f0ee;
		border-radius: 4px;
	}
	.combo.date {
		width: 84px;
		margin-left: 11px;
		border-color: #777;
	}
	.tools {
		display: flex;
		gap: 3px;
		margin-left: 11px;
	}
	.tool {
		width: 18px;
	}

	.row2 {
		height: 23px;
		margin-top: 3px;
		margin-left: 6px;
		flex: none;
		background: #ffffd8;
		display: flex;
	}
	.market {
		width: 158px;
		height: 21px;
		margin: 1px 0 0 1px;
		background: #dcdbd6;
		border: 1px solid #a8a8a4;
		text-align: center;
		font-family: 'Noto Sans CJK KR', sans-serif;
		font-size: 13px;
		line-height: 18px;
		position: relative;
	}
	.grip {
		position: absolute;
		right: 1px;
		bottom: 1px;
		border-style: solid;
		border-width: 0 0 6px 6px;
		border-color: transparent transparent #aaa transparent;
	}
	.quotes {
		width: 882px;
		margin-left: 3px;
		background: #fff;
		display: flex;
		padding: 3px 0 1px 3px;
		line-height: 17px;
	}
	.q {
		height: 19px;
		border: 1px solid #bbb;
		border-left: 0;
		text-align: center;
	}
	.q:first-child {
		border-left: 1px solid #bbb;
	}
	.blue {
		color: #0000d0;
	}
	.tri {
		font-size: 11px;
		letter-spacing: 0;
		font-family: 'DejaVu Sans', sans-serif;
	}
	.w72 { width: 72px; }
	.w62 { width: 62px; }
	.w55 { width: 55px; }
	.w78 { width: 78px; }
	.w71 { width: 71px; }
	.lab {
		width: 22px;
		height: 19px;
		background: #ccc;
		border-top: 1px solid #bbb;
		border-bottom: 1px solid #bbb;
		text-align: center;
		font-family: 'Noto Sans CJK KR', sans-serif;
		font-size: 13px;
		line-height: 17px;
	}
	.term {
		flex: 1;
		text-align: center;
		font-family: 'Noto Sans CJK KR', sans-serif;
		font-size: 13px;
		line-height: 18px;
		color: #222;
	}
	.term .one {
		letter-spacing: 0;
	}

	.main {
		flex: 1;
		min-height: 0;
		display: flex;
		margin-top: 2px;
	}
	.left {
		width: 158px;
		margin-left: 8px;
		flex: none;
		font-family: 'Noto Sans CJK KR', 'Liberation Sans', sans-serif;
	}
	.tabs {
		height: 19px;
		margin-top: 1px;
		display: flex;
		gap: 1px;
		width: 144px;
		border-bottom: 1px solid #ddd;
	}
	.tab {
		flex: 1;
		background: #f2f2f0;
		color: #8e8e8e;
		font-size: 12.5px;
		line-height: 18px;
		text-align: center;
		border-radius: 4px 4px 0 0;
	}
	.tab.on {
		background: #3a8fe0;
		color: #fff;
		font-weight: 500;
	}
	.find {
		display: flex;
		margin-top: 7px;
		height: 19px;
		gap: 3px;
	}
	.find-input {
		width: 95px;
		background: #fff;
		border: 1px solid #555;
	}
	.round {
		width: 18px;
		border-radius: 6px;
	}
	.round:first-of-type {
		margin-left: 2px;
	}
	.grp {
		width: 148px;
		height: 19px;
		margin-bottom: 2px;
		background: #e2e2e0;
		border-bottom: 1px solid #b8b8b4;
		display: flex;
		align-items: center;
		gap: 9px;
		padding-left: 3px;
		font-size: 13px;
		color: #111;
	}
	.grp.head {
		height: 18px;
		margin: 5px 0 0;
		background: #e4e4e2;
		border: 0;
		gap: 8px;
	}
	.tree {
		width: 148px;
		height: 485px;
		background: #fff;
		font-size: 12.5px;
	}
	.root {
		height: 20px;
		display: flex;
		align-items: center;
		gap: 5px;
		padding-left: 1px;
	}
	.opt {
		height: 18px;
		display: flex;
		align-items: center;
		padding-left: 21px;
		white-space: nowrap;
	}
	.radio {
		width: 11px;
		height: 11px;
		flex: none;
		border-radius: 50%;
		background: #fff;
		border: 2px solid #333;
		border-right-color: #aaa;
		border-bottom-color: #aaa;
		position: relative;
		margin-right: 7px;
	}
	.radio.checked::after {
		content: '';
		position: absolute;
		left: 1.500px;
		top: 1.500px;
		width: 4px;
		height: 4px;
		border-radius: 50%;
		background: #1a2a80;
	}
	.lbl {
		font-size: 12px;
		letter-spacing: 0.2px;
		padding: 0 1px;
		line-height: 17px;
	}
	.lbl.hl {
		background: #eee;
	}
	.fav {
		display: flex;
		align-items: center;
		height: 20px;
		font-size: 12.5px;
		margin-top: 1px;
		padding-left: 6px;
	}
	.ghost {
		width: 41px;
		color: #aaa;
		margin-left: 4px;
		border-radius: 4px;
	}
	.ghost:first-of-type {
		margin-left: 9px;
	}

	.chart {
		width: 862px;
		height: 722px;
		margin-left: -6px;
		margin-top: 1px;
		flex: none;
		border: 1px solid #9c9c98;
		background: #8c8c88;
		display: flex;
		flex-direction: column;
		gap: 1px;
	}
	.pane {
		display: block;
		flex: none;
	}
	.dates {
		margin-top: 0;
	}
	.grid {
		stroke: #e4e4e4;
	}
	.ln {
		fill: none;
		stroke-width: 1;
	}
	.trend {
		stroke: #0a34c4;
		stroke-width: 2.600;
	}
	.ring {
		fill: none;
		stroke: #d01818;
		stroke-width: 3;
	}
	.t {
		font-family: 'Liberation Mono', monospace;
		font-size: 12px;
		letter-spacing: -1.2px;
		white-space: pre;
	}
	.bold {
		font-weight: bold;
	}
	.k {
		font-family: 'Noto Sans CJK KR', sans-serif;
		font-size: 13px;
		letter-spacing: 0;
	}
	.foot {
		flex: 1;
		background: #dddcd8;
		display: flex;
		align-items: center;
		padding-left: 0;
	}
	.ft {
		width: 16px;
		height: 15px;
		background: #c8c8c4;
		border: 1px solid #666;
		font-family: 'Noto Sans CJK KR', sans-serif;
		font-size: 12px;
		line-height: 13px;
		text-align: center;
		color: #222;
	}
	.arrowbtn {
		width: 16px;
		height: 15px;
		background: #f4f4f2;
		border: 1px solid #888;
		display: flex;
		align-items: center;
		justify-content: center;
	}
	.al {
		border: 3px solid transparent;
		border-right: 4px solid #111;
		border-left: 0;
	}
	.ar {
		border: 3px solid transparent;
		border-left: 4px solid #111;
		border-right: 0;
	}
	.track {
		width: 451px;
		height: 15px;
		background: #f0f0ee;
		border-top: 1px solid #ccc;
		border-bottom: 1px solid #ccc;
	}
	.slider {
		margin-left: 9px;
	}
	.foot-ic {
		display: flex;
		align-items: center;
		gap: 2px;
		margin-left: 10px;
	}
	.foot-ic.r {
		margin-left: 12px;
		gap: 2px;
	}
	.raised {
		background: #f4f4f2;
		border: 1px solid #999;
		border-radius: 3px;
		height: 17px;
		display: flex;
		align-items: center;
		padding: 0 1px;
	}
	.a {
		font: bold 14px 'Liberation Sans', sans-serif;
		fill: #777;
	}

	.rstrip {
		display: flex;
		gap: 3px;
		margin-left: 3px;
		height: 723px;
	}
	.col {
		width: 27px;
		display: flex;
		flex-direction: column;
	}
	.updn {
		height: 26px;
		flex: none;
	}
	.ub {
		display: flex;
		height: 12px;
		margin-bottom: 1px;
		background: #eee;
		border: 1px solid #b8b8b4;
		align-items: center;
		justify-content: center;
	}
	.u {
		border: 5px solid transparent;
		border-bottom: 4px solid #aaa;
		border-top: 0;
	}
	.d {
		border: 5px solid transparent;
		border-top: 4px solid #aaa;
		border-bottom: 0;
	}
	.d.navy {
		border-top-color: #2a4a70;
	}
	.well {
		flex: 1;
		margin-top: 2px;
		background: #efefef;
		border: 1px solid #a8a8a4;
	}
	.shorts {
		height: 243px;
		background: linear-gradient(90deg, #fff, #dedede);
		padding-top: 1px;
	}
	.sc {
		height: 22px;
		display: flex;
		flex-direction: column;
		align-items: center;
		justify-content: center;
		font: bold 10px/9.500px 'Noto Sans CJK KR', 'Liberation Sans', sans-serif;
		color: #111;
		white-space: nowrap;
	}
	.tools-v {
		height: 555px;
		background: linear-gradient(90deg, #fff, #d8d8d8);
		display: flex;
		flex-direction: column;
		align-items: center;
	}
	.ti {
		width: 25px;
		height: 22px;
		flex: none;
		display: flex;
		align-items: center;
		justify-content: center;
		position: relative;
	}
	.ti.more::after {
		content: '';
		position: absolute;
		right: 0;
		bottom: 1px;
		border-style: solid;
		border-width: 0 0 5px 5px;
		border-color: transparent transparent #666 transparent;
	}
	.sel-t {
		background: #eee;
		border: 1px solid #aaa;
		border-right-color: #fff;
		border-bottom-color: #fff;
	}
	.vsep {
		width: 22px;
		height: 2px;
		background: #aaa;
		margin: 1px 0;
		flex: none;
	}
	.all {
		font: bold 6.500px 'Liberation Sans', sans-serif;
		fill: #ee2010;
	}
	.qm {
		font: bold 15px 'Liberation Sans', sans-serif;
		fill: #555;
	}
	.tt {
		font: bold 16px 'Liberation Serif', serif;
		fill: #555;
	}
	.g {
		font: bold 8px 'Liberation Sans', sans-serif;
		fill: #ee3010;
	}
	.auto {
		font: bold 6.500px 'Liberation Sans', sans-serif;
		fill: #ee2010;
	}
</style>
